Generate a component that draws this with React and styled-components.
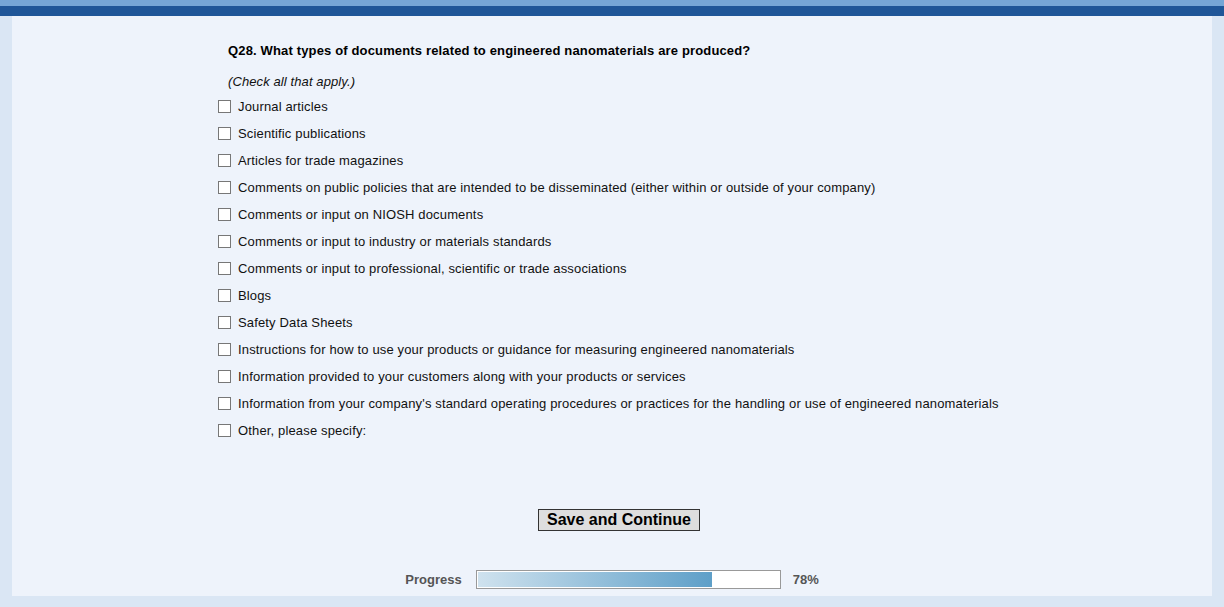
import React from 'react';
import styled, { createGlobalStyle } from 'styled-components';

const GlobalStyle = createGlobalStyle`
	body {
		margin: 0;
		background-color: #dae6f4;
		font-family: "Liberation Sans", Arial, sans-serif;
	}
`;

const TopStripe = styled.div`
	height: 6px;
	background-color: #76a6d6;
`;

const TopBar = styled.div`
	height: 10px;
	background-color: #1f5698;
`;

const Panel = styled.div`
	margin: 0 12px;
	height: 580px;
	box-sizing: border-box;
	background-color: #eef3fb;
	padding: 27px 0 0 206px;
	display: flex;
	flex-direction: column;
`;

const Question = styled.div`
	margin-left: 10px;
	font-size: 13px;
	font-weight: bold;
	line-height: 16px;
	letter-spacing: 0.15px;
	color: #000;
`;

const Hint = styled.div`
	margin: 15px 0 3px 10px;
	font-size: 13px;
	font-style: italic;
	line-height: 16px;
	letter-spacing: 0.1px;
	color: #111;
`;

const Options = styled.div`
	display: flex;
	flex-direction: column;
`;

const Option = styled.label`
	display: flex;
	align-items: center;
	height: 27px;
	font-size: 13px;
	letter-spacing: 0.15px;
	color: #111;
	cursor: pointer;
`;

const Box = styled.span`
	width: 11px;
	height: 11px;
	border: 1px solid #777;
	background-color: #fff;
	margin-right: 7px;
	flex-shrink: 0;
`;

const ButtonRow = styled.div`
	display: flex;
	justify-content: center;
	margin: 65px 0 0 -192px;
`;

const Button = styled.button`
	font-family: "Liberation Sans", Arial, sans-serif;
	font-size: 16px;
	font-weight: bold;
	color: #000;
	background-color: #dedede;
	border: 1px solid #333;
	height: 22px;
	width: 162px;
	padding: 0;
	cursor: pointer;
`;

const ProgressRow = styled.div`
	display: flex;
	align-items: center;
	justify-content: center;
	margin: 39px 0 0 -206px;
	font-size: 13px;
	font-weight: bold;
	color: #555;
`;

const Track = styled.div`
	width: 302px;
	height: 16px;
	border: 1px solid #999;
	background-color: #fff;
	margin: 0 12px 0 14px;
	padding: 1px 0 0 1px;
	box-sizing: content-box;
`;

const Fill = styled.div`
	height: 15px;
	background: linear-gradient(to right, #cfe2ee, #5e9fc8);
`;

const options = [
	'Journal articles',
	'Scientific publications',
	'Articles for trade magazines',
	'Comments on public policies that are intended to be disseminated (either within or outside of your company)',
	'Comments or input on NIOSH documents',
	'Comments or input to industry or materials standards',
	'Comments or input to professional, scientific or trade associations',
	'Blogs',
	'Safety Data Sheets',
	'Instructions for how to use your products or guidance for measuring engineered nanomaterials',
	'Information provided to your customers along with your products or services',
	"Information from your company's standard operating procedures or practices for the handling or use of engineered nanomaterials",
	'Other, please specify:',
];

const App = () => {
	const progress = 78;

	return (
		<>
			<GlobalStyle />
			<TopStripe />
			<TopBar />
			<Panel>
				<Question>Q28. What types of documents related to engineered nanomaterials are produced?</Question>
				<Hint>(Check all that apply.)</Hint>
				<Options>
					{options.map(text => (
						<Option key={text}>
							<Box />
							{text}
						</Option>
					))}
				</Options>
				<ButtonRow>
					<Button>Save and Continue</Button>
				</ButtonRow>
				<ProgressRow>
					Progress
					<Track>
						<Fill style={{ width: `${progress * 234 / 78 / 3.02}%` }} />
					</Track>
					{progress}%
				</ProgressRow>
			</Panel>
		</>
	);
}

export default App;
